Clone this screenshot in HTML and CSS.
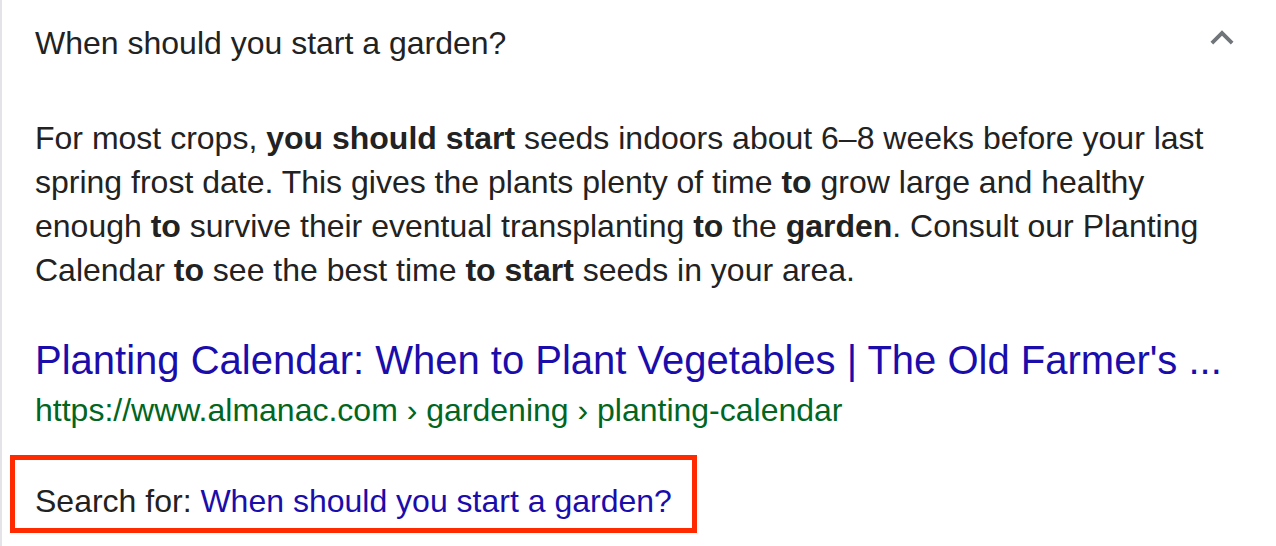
FILE: index.html
```html
<!DOCTYPE html>
<html lang="en">
<head>
<meta charset="utf-8">
<title>When should you start a garden?</title>
<link rel="stylesheet" href="styles.css">
</head>
<body>
<div class="panel">
  <div class="question-row">
    <div class="question">When should you start a garden?</div>
    <svg class="chevron" viewBox="0 0 24 24" width="46" height="46" aria-hidden="true">
      <path d="M7.41 15.41L12 10.83l4.59 4.58L18 14l-6-6-6 6z" fill="#70757a"/>
    </svg>
  </div>
  <p class="answer">For most crops, <b>you should start</b> seeds indoors about 6–8 weeks before your last spring frost date. This gives the plants plenty of time <b>to</b> grow large and healthy enough <b>to</b> survive their eventual transplanting <b>to</b> the <b>garden</b>. Consult our Planting Calendar <b>to</b> see the best time <b>to start</b> seeds in your area.</p>
  <a class="title" href="#">Planting Calendar: When to Plant Vegetables | The Old Farmer's ...</a>
  <div class="url">https://www.almanac.com › gardening › planting-calendar</div>
  <div class="search-box">Search for: <a class="search-link" href="#">When should you start a garden?</a></div>
</div>
</body>
</html>
```

FILE: styles.css
```css
html, body {
  margin: 0;
  padding: 0;
  background: #ffffff;
}

body {
  font-family: "Liberation Sans", Arial, sans-serif;
  color: #222222;
  width: 1276px;
  height: 546px;
  overflow: hidden;
}

.panel {
  border-left: 2px solid #e3e3e8;
  height: 546px;
  box-sizing: border-box;
  padding-left: 33px;
  display: flex;
  flex-direction: column;
  align-items: flex-start;
}

.question-row {
  align-self: stretch;
  display: flex;
  justify-content: space-between;
  align-items: flex-start;
  padding-right: 31px;
}

.question {
  font-size: 32px;
  line-height: 44px;
  padding-top: 21px;
}

.chevron {
  margin-top: 15px;
  display: block;
}

.answer {
  margin: 51px 0 0 0;
  font-size: 32px;
  line-height: 44px;
  width: 1200px;
}

.answer b {
  font-weight: bold;
}

.title {
  margin-top: 44px;
  font-size: 40px;
  line-height: 48px;
  color: #1a0dab;
  text-decoration: none;
  white-space: nowrap;
}

.url {
  font-size: 32px;
  line-height: 44px;
  margin-top: 4px;
  color: #006621;
  white-space: nowrap;
}

.search-box {
  margin-top: 23px;
  margin-left: -25px;
  border: 5px solid #ff2a00;
  padding: 19px 20px 5px 20px;
  font-size: 32px;
  line-height: 44px;
  white-space: nowrap;
}

.search-link {
  color: #1a0dab;
  text-decoration: none;
}
```
